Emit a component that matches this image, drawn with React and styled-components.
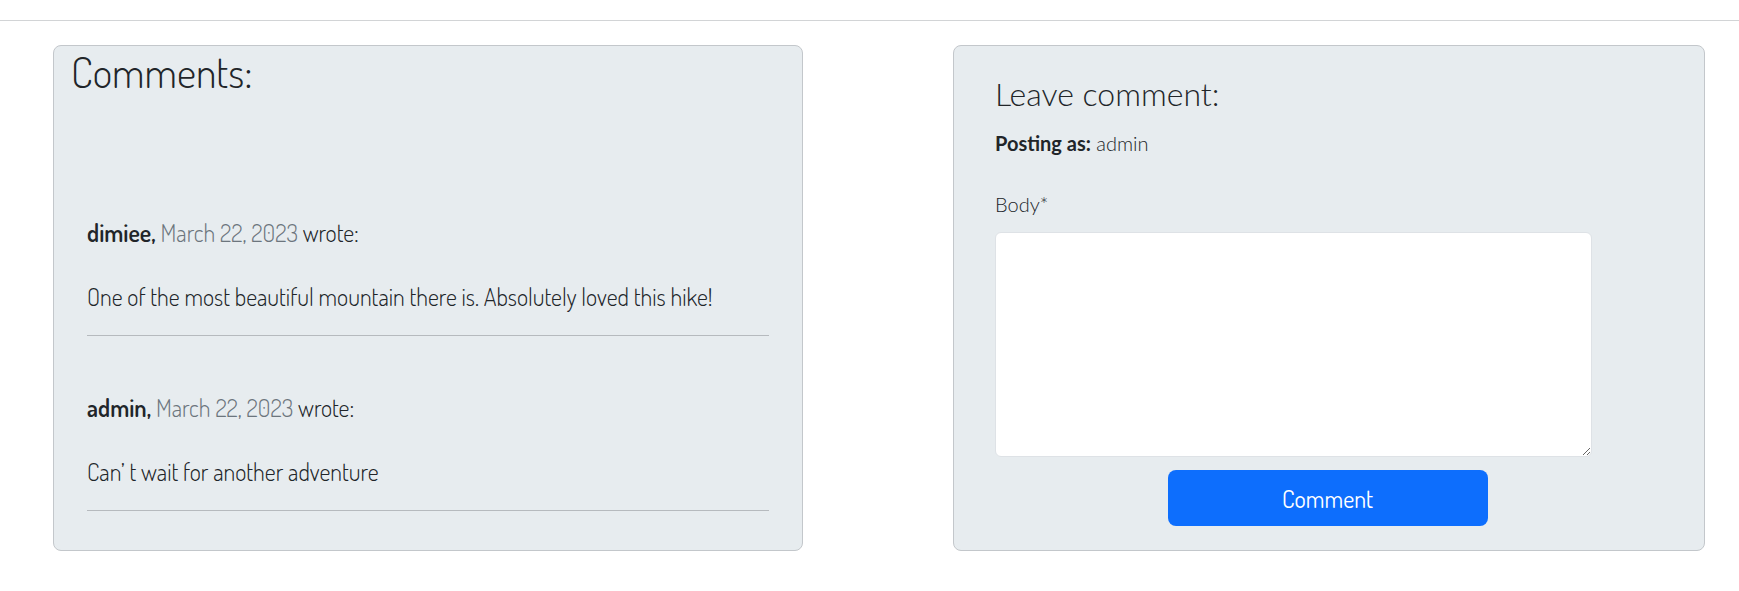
import React from "react";
import styled, { createGlobalStyle } from "styled-components";

const GlobalStyle = createGlobalStyle`
  * { box-sizing: border-box; }
  body {
    margin: 0;
    background: #ffffff;
    color: #212529;
    font-family: "Dosis", "Roboto Condensed", "Liberation Sans", sans-serif;
    font-weight: 300;
  }
`;

const TopBar = styled.header`
  height: 21px;
  border-bottom: 1px solid #d2d4d6;
`;

const Main = styled.main`
  display: flex;
  align-items: stretch;
  gap: 150px;
  padding: 24px 0 40px 53px;
`;

const Panel = styled.section`
  width: ${(p) => p.$w}px;
  background: #e7ecef;
  border: 1px solid #c3c7cb;
  border-radius: 8px;
`;

const CommentsPanel = styled(Panel)`
  padding: 0 20px 37px;
`;

const FormPanel = styled(Panel)`
  padding: 28px 0 24px 41px;
  font-family: "Lato", "Liberation Sans", sans-serif;
`;

const Heading = styled.h2`
  margin: 0 0 117px -3px;
  font-family: "Dosis", sans-serif;
  font-weight: 300;
  font-size: 42px;
  line-height: 52px;
  color: #212529;
`;

const CommentList = styled.div`
  padding: 0 13px;
`;

const CommentItem = styled.article`
  padding-top: ${(p) => (p.$first ? 0 : 54)}px;
  border-bottom: 1px solid #b6babe;
`;

const Meta = styled.p`
  margin: 0 0 28px;
  font-size: 24px;
  line-height: 36px;
  font-weight: 300;
`;

const Author = styled.strong`
  font-weight: 600;
`;

const DateText = styled.span`
  color: #6c757d;
`;

const Body = styled.p`
  margin: 0 0 20px;
  font-size: 24px;
  line-height: 36px;
  font-weight: 300;
`;

const FormTitle = styled.h3`
  margin: 0 0 14px;
  font-family: "Lato", sans-serif;
  font-weight: 300;
  font-size: 32px;
  line-height: 40px;
  color: #212529;
`;

const PostingAs = styled.p`
  margin: 0 0 31px;
  font-size: 20px;
  line-height: 30px;
  font-weight: 300;
`;

const Strong = styled.strong`
  font-weight: 700;
`;

const Label = styled.label`
  display: block;
  margin-bottom: 13px;
  font-size: 20px;
  line-height: 30px;
  font-weight: 300;
  color: #212529;
`;

const TextArea = styled.textarea`
  display: block;
  width: 597px;
  height: 225px;
  padding: 6px 12px;
  border: 1px solid #dee2e6;
  border-radius: 6px;
  background: #ffffff;
  font-family: "Lato", sans-serif;
  font-size: 18px;
  outline: none;
  resize: vertical;
`;

const ButtonRow = styled.div`
  display: flex;
  justify-content: center;
  padding-right: 44px;
  margin-top: 13px;
`;

const Button = styled.button`
  width: 320px;
  height: 56px;
  border: none;
  border-radius: 8px;
  background: #0d6efd;
  color: #ffffff;
  font-family: "Dosis", sans-serif;
  font-weight: 400;
  font-size: 24px;
  cursor: pointer;
`;

const comments = [
  {
    author: "dimiee",
    date: "March 22, 2023",
    body: "One of the most beautiful mountain there is. Absolutely loved this hike!",
  },
  {
    author: "admin",
    date: "March 22, 2023",
    body: "Can\u2019 t wait for another adventure",
  },
];

export default function App() {
  return (
    <>
      <GlobalStyle />
      <TopBar />
      <Main>
        <CommentsPanel $w={750}>
          <Heading>Comments:</Heading>
          <CommentList>
            {comments.map((c, i) => (
              <CommentItem key={i} $first={i === 0}>
                <Meta>
                  <Author>{c.author},</Author> <DateText>{c.date}</DateText> wrote:
                </Meta>
                <Body>{c.body}</Body>
              </CommentItem>
            ))}
          </CommentList>
        </CommentsPanel>
        <FormPanel $w={752}>
          <FormTitle>Leave comment:</FormTitle>
          <PostingAs>
            <Strong>Posting as:</Strong> admin
          </PostingAs>
          <Label htmlFor="body">Body*</Label>
          <TextArea id="body" />
          <ButtonRow>
            <Button type="button">Comment</Button>
          </ButtonRow>
        </FormPanel>
      </Main>
    </>
  );
}
